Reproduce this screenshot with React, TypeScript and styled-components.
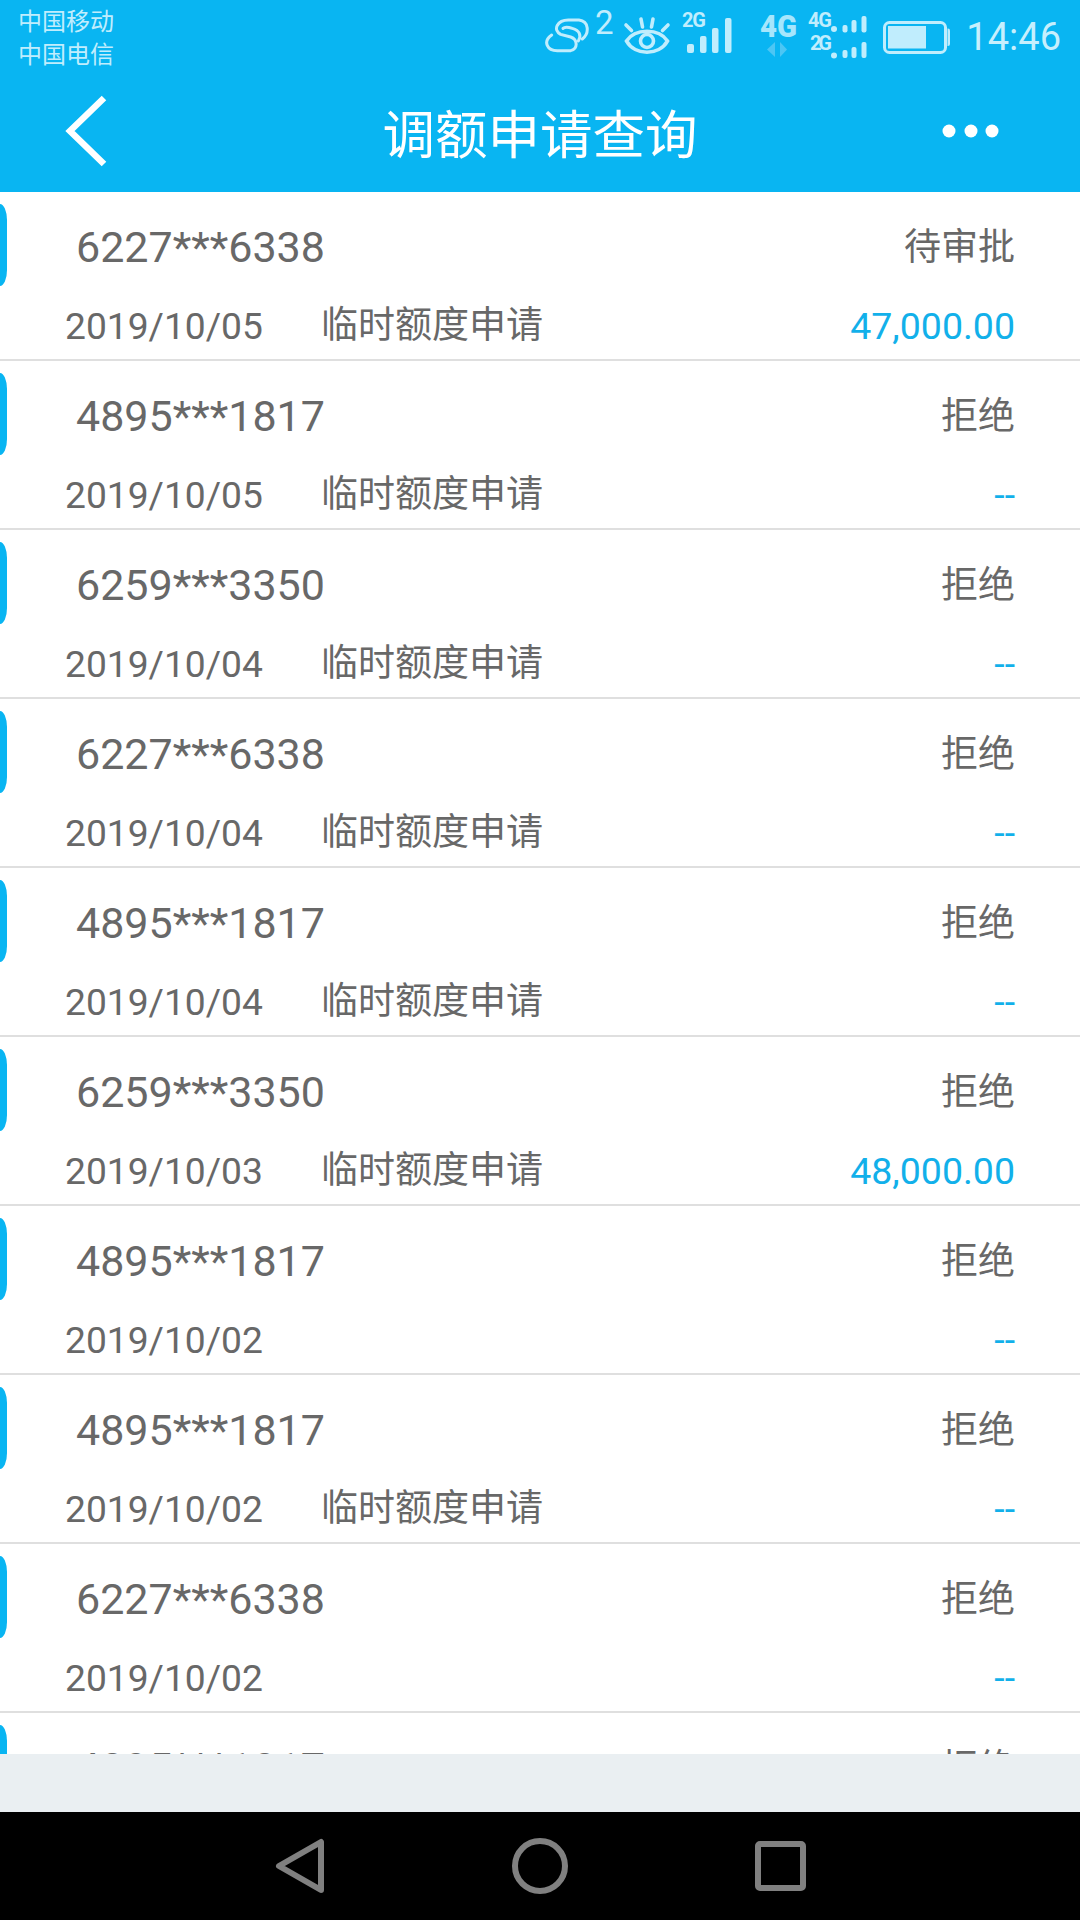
import React from 'react';
import styled, { createGlobalStyle } from 'styled-components';

const FONT = `Roboto, "Noto Sans CJK SC", sans-serif`;
const BLUE = '#09b5f2';
const ICON = '#c0edfd';

const Global = createGlobalStyle`
  html, body { margin: 0; padding: 0; background: #000; }
  #root { width: 1080px; height: 1920px; }
`;

const Page = styled.div`
  width: 1080px;
  height: 1920px;
  display: flex;
  flex-direction: column;
  overflow: hidden;
  font-family: ${FONT};
`;

const Header = styled.header`
  flex: 0 0 192px;
  background: ${BLUE};
  display: flex;
  flex-direction: column;
`;

const StatusBar = styled.div`
  height: 75px;
  display: flex;
  align-items: flex-start;
  padding: 0 19px 0 18px;
  color: ${ICON};
`;

const Carriers = styled.div`
  display: flex;
  flex-direction: column;
  padding-top: 6px;
  font-size: 24px;
  line-height: 33px;
  margin-right: auto;
`;

const StatusIcon = styled.svg<{ $ml?: number }>`
  display: block;
  height: 75px;
  margin-left: ${(p) => p.$ml ?? 0}px;
  flex: none;
`;

const Clock = styled.span`
  font-size: 38px;
  line-height: 75px;
  margin-left: 13px;
  color: #c6effd;
`;

const Toolbar = styled.div`
  flex: 1;
  display: grid;
  grid-template-columns: 1fr auto 1fr;
  align-items: center;
  padding: 0 64px 5px;
`;

const BackSvg = styled.svg`
  display: block;
  justify-self: start;
`;

const MoreSvg = styled.svg`
  display: block;
  justify-self: end;
  margin-right: 16px;
`;

const Title = styled.h1`
  margin: 0;
  padding-top: 10px;
  font-size: 52.5px;
  font-weight: 400;
  color: #fff;
  line-height: 1;
`;

const List = styled.main`
  flex: 1;
  min-height: 0;
  overflow: hidden;
  background: #fff;
`;

const Row = styled.div`
  position: relative;
  box-sizing: border-box;
  height: 169px;
  padding: 30px 65px 8px;
  border-bottom: 2px solid #dfdfdf;
  display: flex;
  flex-direction: column;
  gap: 29px;
`;

const Tab = styled.span`
  position: absolute;
  left: 0;
  top: 12px;
  width: 7px;
  height: 82px;
  background: ${BLUE};
  border-radius: 0 7px 7px 0 / 0 16px 16px 0;
`;

const Line = styled.div`
  display: flex;
  align-items: center;
  height: 50px;
  line-height: 50px;
  color: #686868;
  font-size: 37px;
  white-space: nowrap;
`;

const Card = styled.span`
  font-size: 43px;
  padding-left: 11px;
  margin-right: auto;
`;

const Status = styled.span`
  padding-top: 2px;
`;

const DateText = styled.span`
  font-size: 37.2px;
  margin-right: 58px;
`;

const Amount = styled.span`
  font-size: 37.5px;
  margin-left: auto;
  color: #12b0ea;
`;

const Footer = styled.div`
  flex: 0 0 58px;
  background: #eaeff2;
`;

const NavBar = styled.nav`
  flex: 0 0 108px;
  background: #000;
  display: flex;
  align-items: center;
  justify-content: center;
  gap: 173px;
`;

const NavIcon = styled.svg`
  display: block;
  width: 64px;
  height: 64px;
  fill: none;
  stroke: #808080;
  stroke-width: 6;
  stroke-linejoin: round;
`;

const rows = [
  ['6227***6338', '待审批', '2019/10/05', true, '47,000.00'],
  ['4895***1817', '拒绝', '2019/10/05', true, '--'],
  ['6259***3350', '拒绝', '2019/10/04', true, '--'],
  ['6227***6338', '拒绝', '2019/10/04', true, '--'],
  ['4895***1817', '拒绝', '2019/10/04', true, '--'],
  ['6259***3350', '拒绝', '2019/10/03', true, '48,000.00'],
  ['4895***1817', '拒绝', '2019/10/02', false, '--'],
  ['4895***1817', '拒绝', '2019/10/02', true, '--'],
  ['6227***6338', '拒绝', '2019/10/02', false, '--'],
  ['4895***1817', '拒绝', '2019/10/02', true, '--'],
] as const;

const SwirlIcon = () => (
  <StatusIcon width={68} viewBox="0 0 68 75">
    <g transform="translate(-6 5) scale(.3333)" fill="none" stroke={ICON} strokeWidth={9} strokeLinecap="round">
      <path d="M130 102C152 85 150 48 120 45L88 45C55 45 40 75 65 88L95 96C116 103 118 131 95 137L55 137C25 137 10 110 38 90" />
      <path d="M72 70C78 64 88 66 100 70C122 76 128 92 118 108" />
    </g>
    <text x={50} y={34} fontFamily={FONT} fontSize={33} fill={ICON}>2</text>
  </StatusIcon>
);

const EyeIcon = () => (
  <StatusIcon width={62} viewBox="614 0 62 75" fill="none" stroke={ICON} strokeWidth={3.6} strokeLinecap="round">
    <path d="M627.5 41C636 28 660 28 668.5 41C660 56 636 56 627.5 41Z" />
    <circle cx={648} cy={41} r={6.5} />
    <path d="M627 25L632.5 30.5M642 19L643.5 27M654 19L652.5 27M669 25L663.5 30.5" />
  </StatusIcon>
);

const SignalIcon = () => (
  <StatusIcon width={60} viewBox="676 0 60 75" fill={ICON}>
    <text x={683} y={27} fontFamily={FONT} fontSize={20} fontWeight={700} textLength={24}>2G</text>
    <rect x={688} y={44} width={7} height={9} rx={2} />
    <rect x={701} y={36} width={6.5} height={17} rx={2} />
    <rect x={713} y={28} width={6.5} height={25} rx={2} />
    <rect x={726} y={18} width={6.5} height={35} rx={2} />
  </StatusIcon>
);

const DataIcon = () => (
  <StatusIcon width={46} viewBox="756 0 46 75" fill="#a6e6fc" $ml={20}>
    <text x={761} y={37} fontFamily={FONT} fontSize={32} fontWeight={900} textLength={37} lengthAdjust="spacingAndGlyphs">4G</text>
    <path d="M776 42V57L768 49.5Z" fill="#4cc6f4" />
    <path d="M781 42V57L788 49.5Z" fill="#4cc6f4" />
  </StatusIcon>
);

const DualIcon = () => (
  <StatusIcon width={64} viewBox="806 0 64 75" fill={ICON} $ml={4}>
    <text x={809} y={27} fontFamily={FONT} fontSize={20} fontWeight={700} textLength={24}>4G</text>
    <text x={811} y={50} fontFamily={FONT} fontSize={20} fontWeight={700} textLength={22}>2G</text>
    <circle cx={835} cy={29} r={3} />
    <rect x={843.5} y={25} width={5} height={7.5} rx={2} />
    <rect x={852.5} y={20} width={5} height={12.5} rx={2} />
    <rect x={862.5} y={16} width={5} height={16.5} rx={2} />
    <circle cx={835} cy={55.5} r={3} />
    <rect x={843.5} y={50} width={5} height={8} rx={2} />
    <rect x={852.5} y={47} width={5} height={11} rx={2} />
    <rect x={862.5} y={42} width={5} height={16} rx={2} />
  </StatusIcon>
);

const BatteryIcon = () => (
  <StatusIcon width={74} viewBox="880 0 74 75" $ml={10}>
    <rect x={885.5} y={22.5} width={61} height={30} rx={5} fill="none" stroke={ICON} strokeWidth={3} />
    <rect x={889} y={26} width={38} height={22.5} fill={ICON} />
    <path d="M948.5 28.5H949a2 2 0 0 1 2 2V44a2 2 0 0 1-2 2h-.5Z" fill={ICON} />
  </StatusIcon>
);

const BackIcon = () => (
  <BackSvg width={44} height={72} viewBox="0 0 44 72" fill="none" stroke="#fff" strokeWidth={6.5}>
    <path d="M40 3L6 36L40 69" />
  </BackSvg>
);

const MoreIcon = () => (
  <MoreSvg width={58} height={14} viewBox="0 0 58 14" fill="#fff">
    <circle cx={7} cy={7} r={6.5} />
    <circle cx={29} cy={7} r={6.5} />
    <circle cx={50} cy={7} r={6.5} />
  </MoreSvg>
);

export default function App() {
  return (
    <Page>
      <Global />
      <Header>
        <StatusBar>
          <Carriers>
            <span>中国移动</span>
            <span>中国电信</span>
          </Carriers>
          <SwirlIcon />
          <EyeIcon />
          <SignalIcon />
          <DataIcon />
          <DualIcon />
          <BatteryIcon />
          <Clock>14:46</Clock>
        </StatusBar>
        <Toolbar>
          <BackIcon />
          <Title>调额申请查询</Title>
          <MoreIcon />
        </Toolbar>
      </Header>
      <List>
        {rows.map(([card, status, date, applied, amount], i) => (
          <Row key={i}>
            <Tab />
            <Line>
              <Card>{card}</Card>
              <Status>{status}</Status>
            </Line>
            <Line>
              <DateText>{date}</DateText>
              {applied && <span>临时额度申请</span>}
              <Amount>{amount}</Amount>
            </Line>
          </Row>
        ))}
      </List>
      <Footer />
      <NavBar>
        <NavIcon viewBox="0 0 64 64"><path d="M50 8V56L8 32Z" /></NavIcon>
        <NavIcon viewBox="0 0 64 64"><circle cx={32} cy={32} r={25} /></NavIcon>
        <NavIcon viewBox="0 0 64 64"><rect x={13} y={10} width={45} height={44} rx={2} /></NavIcon>
      </NavBar>
    </Page>
  );
}
